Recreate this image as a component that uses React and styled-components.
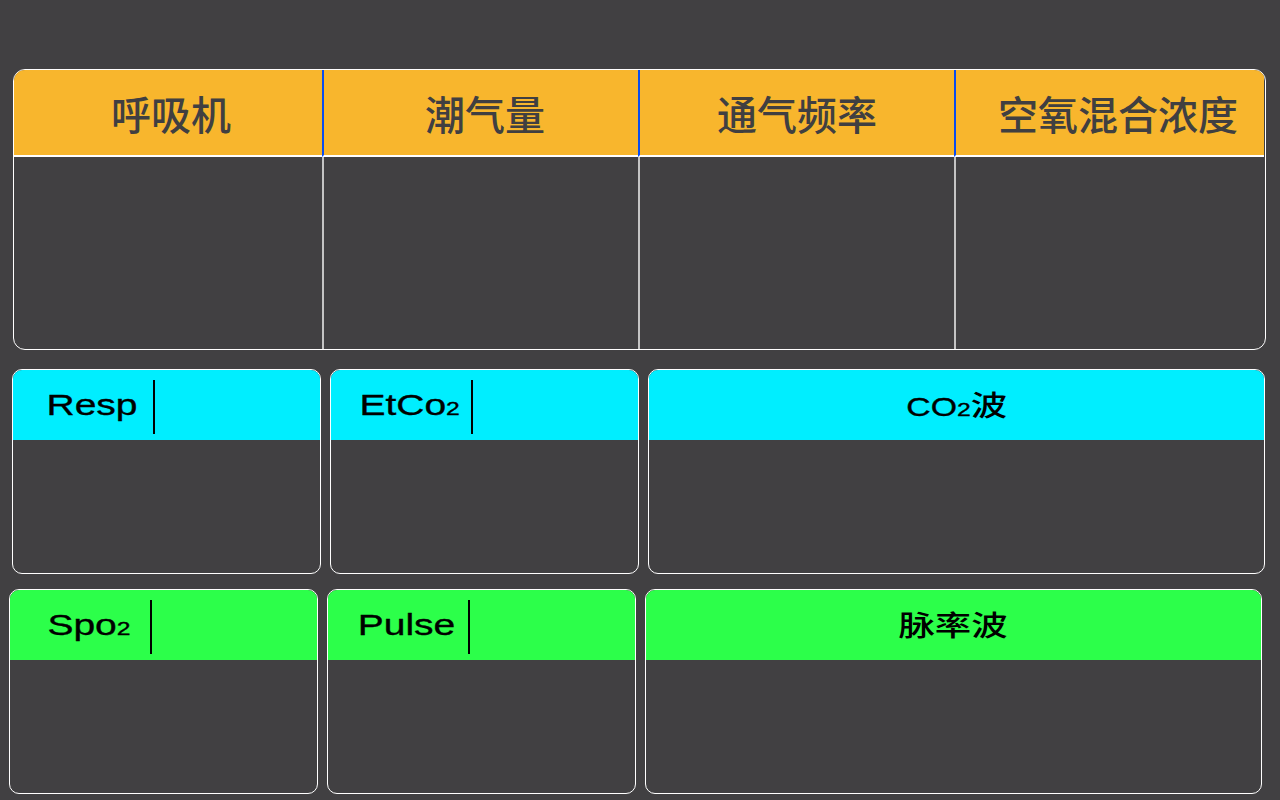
import React from "react";
import styled, { createGlobalStyle } from "styled-components";

const GlobalStyle = createGlobalStyle`
  html, body {
    margin: 0;
    padding: 0;
    background: #414042;
  }
  * {
    box-sizing: border-box;
  }
`;

// Farben
const ORANGE = "#f8b62d";
const CYAN = "#00eeff";
const GREEN = "#2cff4a";

const Screen = styled.div`
  width: 1280px;
  height: 800px;
  padding-top: 69px;
  background: #414042;
  overflow: hidden;
`;

const VentTable = styled.div`
  margin-left: 13px;
  width: 1253px;
  height: 281px;
  border: 1px solid #ffffff;
  border-radius: 12px;
  overflow: hidden;
  display: grid;
  grid-template-columns: 308px 316px 316px 310px;
`;

const VentColumn = styled.div`
  display: flex;
  flex-direction: column;
`;

const VentHead = styled.div`
  height: 87px;
  background: ${ORANGE};
  border-bottom: 2px solid #ffffff;
  border-left: ${(p) => (p.$first ? "none" : "2px solid #0a4cf0")};
  display: flex;
  align-items: center;
  justify-content: center;
  padding-left: ${(p) => p.$shift || 0}px;
  font-family: "Noto Sans CJK SC", "Noto Sans", sans-serif;
  font-size: 40px;
  font-weight: 500;
  color: #403f41;
`;

const VentBody = styled.div`
  flex: 1;
  border-left: ${(p) => (p.$first ? "none" : "2px solid #c4c4c4")};
`;

const CardRow = styled.div`
  display: grid;
  grid-template-columns: 309px 309px 617px;
  column-gap: 9px;
  margin-top: ${(p) => p.$top}px;
  margin-left: ${(p) => p.$left}px;
`;

const Card = styled.div`
  height: 205px;
  border: 1px solid #ffffff;
  border-radius: 10px;
  overflow: hidden;
  display: flex;
  flex-direction: column;
`;

const CardHead = styled.div`
  height: 70px;
  background: ${(p) => p.$color};
  display: flex;
  align-items: center;
  justify-content: ${(p) => (p.$center ? "center" : "flex-start")};
`;

const LabelBox = styled.div`
  width: 140px;
  padding-left: 18px;
  align-self: center;
  display: flex;
  justify-content: center;
`;

const Label = styled.span`
  display: inline-block;
  transform: scaleX(1.3);
  transform-origin: center;
  font-family: "Liberation Sans", "Noto Sans CJK SC", sans-serif;
  font-size: ${(p) => p.$size || 30}px;
  color: #000;
  -webkit-text-stroke: 0.35px #000;
  white-space: nowrap;
  line-height: 1;
`;

const Sub = styled.span`
  font-size: 19px;
`;

const Han = styled.span`
  font-family: "Noto Sans CJK SC", sans-serif;
  font-size: 28px;
  font-weight: 500;
  -webkit-text-stroke: 0;
`;

const HeadDivider = styled.div`
  width: 2px;
  height: 54px;
  background: #000;
  align-self: flex-start;
  margin-top: 10px;
`;

const CardBody = styled.div`
  flex: 1;
`;

const ventColumns = [
  { title: "呼吸机", shift: 6 },
  { title: "潮气量", shift: 8 },
  { title: "通气频率", shift: 0 },
  { title: "空氧混合浓度", shift: 16 },
];

const MetricCard = ({ color, children }) => (
  <Card>
    <CardHead $color={color}>
      <LabelBox>
        <Label>{children}</Label>
      </LabelBox>
      <HeadDivider />
    </CardHead>
    <CardBody />
  </Card>
);

const WaveCard = ({ color, children }) => (
  <Card>
    <CardHead $color={color} $center>
      <Label $size={26}>{children}</Label>
    </CardHead>
    <CardBody />
  </Card>
);

export default function App() {
  return (
    <>
      <GlobalStyle />
      <Screen>
        <VentTable>
          {ventColumns.map((col, i) => (
            <VentColumn key={col.title}>
              <VentHead $first={i === 0} $shift={col.shift}>
                {col.title}
              </VentHead>
              <VentBody $first={i === 0} />
            </VentColumn>
          ))}
        </VentTable>

        <CardRow $top={19} $left={12}>
          <MetricCard color={CYAN}>Resp</MetricCard>
          <MetricCard color={CYAN}>
            EtCo<Sub>2</Sub>
          </MetricCard>
          <WaveCard color={CYAN}>
            CO<Sub>2</Sub>
            <Han>波</Han>
          </WaveCard>
        </CardRow>

        <CardRow $top={15} $left={9}>
          <MetricCard color={GREEN}>
            Spo<Sub>2</Sub>
          </MetricCard>
          <MetricCard color={GREEN}>Pulse</MetricCard>
          <WaveCard color={GREEN}>
            <Han>脉率波</Han>
          </WaveCard>
        </CardRow>
      </Screen>
    </>
  );
}
